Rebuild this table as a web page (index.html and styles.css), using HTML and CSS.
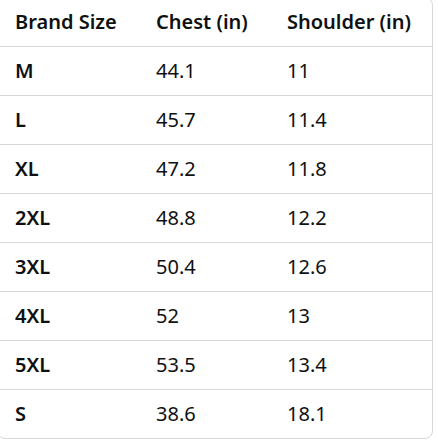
FILE: index.html
```html
<!DOCTYPE html>
<html>
<head>
<meta charset="utf-8">
<link rel="stylesheet" href="styles.css">
</head>
<body>
<div class="chart">
  <table class="size-table">
    <colgroup>
      <col class="c1"><col class="c2"><col class="c3">
    </colgroup>
    <thead>
      <tr><th>Brand Size</th><th>Chest (in)</th><th>Shoulder (in)</th></tr>
    </thead>
    <tbody>
      <tr><th>M</th><td>44.1</td><td>11</td></tr>
      <tr><th>L</th><td>45.7</td><td>11.4</td></tr>
      <tr><th>XL</th><td>47.2</td><td>11.8</td></tr>
      <tr><th>2XL</th><td>48.8</td><td>12.2</td></tr>
      <tr><th>3XL</th><td>50.4</td><td>12.6</td></tr>
      <tr><th>4XL</th><td>52</td><td>13</td></tr>
      <tr><th>5XL</th><td>53.5</td><td>13.4</td></tr>
      <tr><th>S</th><td>38.6</td><td>18.1</td></tr>
    </tbody>
  </table>
</div>
</body>
</html>
```

FILE: styles.css
```css
html, body {
  margin: 0;
  padding: 0;
  background: #ffffff;
}
body {
  font-family: "Noto Sans", "Open Sans", sans-serif;
  color: #0f1111;
  overflow: hidden;
}
.chart {
  margin: -3px 0 0 -3px;
  width: 434px;
  border: 1px solid #d5d9d9;
  border-radius: 8px;
  overflow: hidden;
}
.size-table {
  width: 100%;
  border-collapse: collapse;
  table-layout: fixed;
}
.c1 { width: 141px; }
.c2 { width: 131px; }
.c3 { width: auto; }
.size-table th,
.size-table td {
  height: 49px;
  padding: 0 0 0 17px;
  text-align: left;
  vertical-align: middle;
  font-size: 20px;
  line-height: 24px;
  box-sizing: border-box;
}
.size-table thead th {
  height: 48px;
}
.size-table th {
  font-weight: 600;
}
.size-table td {
  font-weight: 400;
  color: #0f1111;
}
.size-table tr {
  border-bottom: 1px solid #d5d9d9;
}
.size-table tbody tr:last-child {
  border-bottom: none;
}
```
